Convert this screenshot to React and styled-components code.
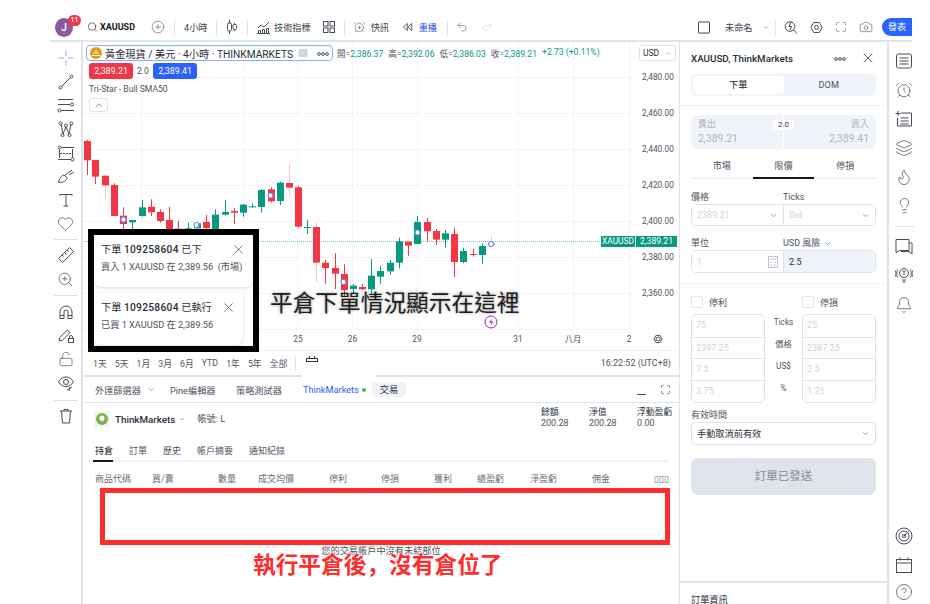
import React from "react"
import styled, { createGlobalStyle } from "styled-components"
import {
  AlarmClock, AlarmClockPlus, Bell, Camera, ChevronDown, CircleHelp, CirclePlus, Flame, Heart, Layers,
  Lightbulb, LockOpen, Maximize, Redo2, Search, Undo2, X, ZoomIn,
} from "lucide-react"

const GlobalStyle = createGlobalStyle`
body { margin: 0; background: #fff; }
* { box-sizing: border-box; }
`

const BAND = "#e0e3eb"
const SOFT = "#f0f3fa"
const GREEN = "#089981"
const RED = "#f23645"
const ICON = "#4a4d57"

const Page = styled.div`
width: 930px;
height: 604px;
overflow: hidden;
background: #fff;
padding: 14px 18px 0 50px;
display: flex;
flex-direction: column;
font-family: Roboto, "Noto Sans CJK TC", sans-serif;
color: #131722;
font-size: 9.2px;
`

/* top toolbar */
const TopBar = styled.div`
height: 26px;
display: flex;
align-items: center;
flex: none;
`
const Slot = styled.div`
flex: none;
display: flex;
align-items: center;
gap: ${({ $gap }) => $gap || 0}px;
margin-left: ${({ $ml }) => $ml || 0}px;
width: ${({ $w }) => $w}px;
white-space: nowrap;
color: ${({ $color }) => $color || "#3d404a"};
`
const Accent = styled.span`
color: #1e53e5;
`
const TopSep = styled.div`
flex: none;
width: 1px;
height: 15px;
background: ${BAND};
margin-left: ${({ $ml }) => $ml || 9}px;
`
const Avatar = styled.div`
position: relative;
width: 19px;
height: 19px;
border-radius: 50%;
background: #8a5a9e;
color: #fff;
font-size: 10px;
font-weight: 500;
display: flex;
align-items: center;
justify-content: center;
`
const Badge = styled.span`
position: absolute;
left: 13px;
top: -3px;
width: 13px;
height: 11px;
border-radius: 6px;
background: ${RED};
color: #fff;
font-size: 7px;
line-height: 11px;
text-align: center;
`
const SymbolName = styled.b`
font-size: 9px;
font-weight: 700;
color: #131722;
`
const PublishBtn = styled.div`
flex: none;
margin-left: 9px;
width: 30px;
height: 18px;
border-radius: 9px 0 0 9px;
background: #2962ff;
color: #fff;
font-size: 9.2px;
line-height: 18px;
text-align: center;
`
const Spacer = styled.div`
flex: 1;
`

/* main layout */
const Main = styled.div`
flex: 1;
min-height: 0;
display: flex;
background: ${BAND};
padding-top: 2px;
`
const LeftBar = styled.div`
flex: none;
width: 31px;
margin-right: 2px;
background: #fff;
display: flex;
flex-direction: column;
align-items: center;
padding-top: 4px;
`
const ToolCell = styled.div`
flex: none;
height: ${({ $h }) => $h || 23.7}px;
width: 100%;
display: flex;
align-items: center;
justify-content: center;
color: ${ICON};
`
const ToolSep = styled.div`
flex: none;
width: 24px;
height: 1px;
background: ${BAND};
margin: ${({ $m }) => $m || "3px 0"};
`
const Center = styled.div`
flex: none;
width: 596px;
margin-right: 1px;
display: flex;
flex-direction: column;
gap: 2px;
`

/* chart */
const ChartPane = styled.div`
position: relative;
flex: none;
height: 333px;
background: #fff;
display: flex;
flex-direction: column;
`
const Canvas = styled.div`
position: relative;
flex: none;
height: 308px;
svg.plot { position: absolute; left: 0; top: 0; }
`
const AxisText = styled.text`
font-family: Roboto, "Noto Sans CJK TC", sans-serif;
font-size: 8.3px;
fill: #50535e;
text-anchor: ${({ $anchor }) => $anchor || "start"};
`
const Legend = styled.div`
position: absolute;
left: 3px;
top: 3px;
display: flex;
flex-direction: column;
align-items: flex-start;
`
const LegendRow = styled.div`
display: flex;
align-items: center;
`
const TitleBox = styled.div`
width: 247px;
height: 16px;
border: 1px solid #8fa9f7;
border-radius: 4px;
display: flex;
align-items: center;
padding: 0 3px;
font-size: 10.2px;
white-space: nowrap;
color: #2a2e39;
background: #fff;
`
const TitleDots = styled.span`
margin-left: auto;
`
const GoldCoin = styled.span`
flex: none;
width: 12px;
height: 12px;
border-radius: 50%;
background: #d9a012;
margin-right: 3px;
display: flex;
align-items: center;
justify-content: center;
`
const Ohlc = styled.div`
display: flex;
gap: 5px;
margin-left: 4px;
font-size: 8.6px;
white-space: nowrap;
color: #50535e;
b { font-weight: 400; color: ${GREEN}; }
`
const QuoteRow = styled.div`
display: flex;
align-items: center;
margin: 2px 0 0 3px;
`
const Quote = styled.div`
width: 44px;
height: 16px;
border-radius: 3px;
background: ${({ $bg }) => $bg};
color: #fff;
font-size: 8.8px;
line-height: 16px;
text-align: center;
`
const Spread = styled.span`
width: 20px;
text-align: center;
font-size: 8.5px;
color: #50535e;
`
const Indicator = styled.div`
margin: 4px 0 0 3px;
font-size: 8.6px;
color: #50535e;
line-height: 12px;
`
const Collapse = styled.div`
margin: 3px 0 0 3px;
width: 19px;
height: 14px;
border: 1px solid ${BAND};
border-radius: 3px;
display: flex;
align-items: center;
justify-content: center;
background: #fff;
`
const FlippedChevron = styled(ChevronDown)`
transform: rotate(180deg);
`
const CurrencySelect = styled.div`
position: absolute;
left: 556px;
top: 3px;
width: 37px;
height: 16px;
border: 1px solid ${BAND};
border-radius: 3px;
background: #fff;
display: flex;
align-items: center;
justify-content: space-between;
padding: 0 3px;
font-size: 8.5px;
color: #2a2e39;
`
const PriceTag = styled.div`
position: absolute;
left: 518px;
top: 194px;
height: 11px;
display: flex;
gap: 1px;
font-size: 8.4px;
line-height: 11px;
color: #fff;
text-align: center;
span { display: block; background: ${GREEN}; }
`
const TagName = styled.span`
width: 34px;
`
const TagPrice = styled.span`
width: 41px;
font-size: 8.6px;
`
const RangeBar = styled.div`
flex: 1;
border-top: 1px solid ${SOFT};
display: flex;
align-items: center;
padding: 0 8px 0 10px;
gap: 8px;
color: #50535e;
font-size: 8.8px;
white-space: nowrap;
`
const RangeSep = styled.div`
width: 1px;
height: 15px;
background: ${BAND};
`
const CalendarMark = styled.svg`
margin: -8px 0 0 2px;
`
const Clock = styled.div`
margin-left: auto;
font-size: 9px;
color: #50535e;
`

/* annotations laid over the screenshot */
const BlackFrame = styled.div`
position: absolute;
left: 5px;
top: 187px;
width: 171px;
height: 123px;
border: 6px solid #000;
background: #fff;
display: flex;
flex-direction: column;
gap: 6px;
z-index: 3;
`
const Toast = styled.div`
flex: none;
width: ${({ $w }) => $w}px;
height: 52px;
padding: 7px 7px 0;
border-radius: 0 0 7px 7px;
box-shadow: 0 1px 3px rgba(30, 35, 60, 0.18);
display: flex;
flex-direction: column;
`
const ToastHead = styled.div`
display: flex;
align-items: center;
justify-content: space-between;
font-size: 10.2px;
line-height: 14px;
white-space: nowrap;
color: #2a2e39;
b { font-weight: 500; letter-spacing: 0.3px; }
`
const ToastBody = styled.div`
margin-top: 4px;
font-size: 9.2px;
line-height: 12px;
white-space: pre;
color: #50535e;
`
const Caption = styled.div`
position: absolute;
left: 187px;
top: 246px;
font-size: 22.7px;
line-height: 32px;
white-space: nowrap;
color: #1d1d1d;
text-shadow: 0 0 3px rgba(0, 0, 0, 0.45);
z-index: 3;
`
const RedBox = styled.div`
position: absolute;
left: 17px;
top: 111px;
width: 570px;
height: 57px;
border: 5px solid #ff2d2d;
`
const RedCaption = styled.div`
position: absolute;
left: 170px;
top: 171px;
font-family: "Noto Sans CJK SC", sans-serif;
font-size: 22.7px;
font-weight: 700;
line-height: 32px;
white-space: nowrap;
color: #ff2d2d;
text-shadow: 0 0 2px #fff;
`

/* bottom panel */
const BottomPanel = styled.div`
position: relative;
flex: 1;
background: #fff;
display: flex;
flex-direction: column;
`
const Notch = styled.div`
position: absolute;
left: 219px;
top: -2px;
width: 74px;
height: 2px;
background: #fff;
`
const PanelTabs = styled.div`
flex: none;
height: 26px;
border-bottom: 1px solid ${BAND};
display: flex;
align-items: center;
color: #50535e;
white-space: nowrap;
font-size: 9.2px;
padding-left: 12px;
`
const PanelTab = styled.div`
flex: none;
display: flex;
align-items: center;
margin-left: ${({ $ml }) => $ml || 0}px;
width: ${({ $w }) => $w}px;
gap: ${({ $gap }) => $gap || 0}px;
color: ${({ $color }) => $color || "#50535e"};
`
const OnlineDot = styled.span`
flex: none;
width: 4px;
height: 4px;
border-radius: 50%;
background: #4caf50;
`
const TradeChip = styled.div`
flex: none;
margin-left: 5px;
width: 34px;
height: 15px;
border-radius: 4px;
background: ${SOFT};
line-height: 15px;
text-align: center;
color: #2a2e39;
`
const MinMark = styled.div`
width: 9px;
height: 1px;
background: #50535e;
margin: 9px 0 0 231px;
`
const AccountRow = styled.div`
flex: none;
height: 43px;
display: flex;
padding: 8px 11px 0 11px;
`
const BrokerLogo = styled.div`
flex: none;
width: 16px;
height: 16px;
border-radius: 2px;
background: ${SOFT};
display: flex;
align-items: center;
justify-content: center;
`
const BrokerName = styled.div`
height: 16px;
margin-left: 5px;
display: flex;
align-items: center;
gap: 3px;
font-weight: 500;
font-size: 9.8px;
white-space: nowrap;
color: #2a2e39;
`
const AccountNo = styled.div`
margin-left: 11px;
height: 16px;
line-height: 16px;
color: #50535e;
white-space: nowrap;
`
const Stats = styled.div`
margin-left: auto;
margin-top: -4px;
display: flex;
`
const Stat = styled.div`
width: ${({ $w }) => $w}px;
font-size: 8.8px;
line-height: 11px;
color: #2a2e39;
white-space: nowrap;
div { font-size: 9px; color: #50535e; }
`
const SubTabs = styled.div`
flex: none;
margin: -4px 10px 0;
height: 20px;
border-bottom: 2px solid ${SOFT};
display: flex;
gap: 16px;
padding: 0 2px;
font-size: 9px;
color: #50535e;
line-height: 18px;
`
const SubTab = styled.div`
position: relative;
height: 20px;
color: ${({ $active }) => ($active ? "#131722" : "#50535e")};
&::after {
  content: "";
  display: ${({ $active }) => ($active ? "block" : "none")};
  position: absolute;
  left: -2px;
  right: 0;
  bottom: 0;
  height: 2px;
  background: #131722;
}
`
const Columns = styled.div`
flex: none;
margin-top: 9px;
height: 17px;
display: grid;
grid-template-columns: 57px 66px 40px 71px 52px 53px 43px 53px 62px 62px 20px;
padding-left: 12px;
font-size: 9px;
color: #6a6d78;
line-height: 16px;
white-space: nowrap;
`
const EmptyNote = styled.div`
margin-top: 57px;
text-align: center;
font-size: 9.2px;
line-height: 12px;
color: #50535e;
`

/* order panel */
const OrderPanel = styled.div`
flex: none;
width: 207px;
margin-right: 2px;
background: #fff;
display: flex;
flex-direction: column;
`
const Section = styled.div`
flex: none;
margin: ${({ $mt }) => $mt || 0}px 11px 0;
`
const PanelHead = styled.div`
flex: none;
height: 32px;
display: flex;
align-items: center;
padding: 0 11px;
font-size: 9.8px;
font-weight: 500;
white-space: nowrap;
color: #2a2e39;
`
const HeadDots = styled.span`
margin: 0 14px 0 auto;
`
const Segment = styled.div`
height: 22px;
border-radius: 5px;
background: ${SOFT};
padding: 2px;
display: flex;
`
const SegmentItem = styled.div`
flex: 1;
border-radius: 4px;
background: ${({ $active }) => ($active ? "#fff" : "transparent")};
line-height: 18px;
text-align: center;
color: ${({ $active }) => ($active ? "#131722" : "#50535e")};
`
const Rule = styled.div`
flex: none;
height: 1px;
background: ${SOFT};
margin-top: ${({ $mt }) => $mt}px;
`
const SidesBox = styled.div`
position: relative;
height: 34px;
border-radius: 6px;
background: ${SOFT};
display: flex;
justify-content: space-between;
padding: 3px 7px 0;
color: #b2b5be;
line-height: 13px;
&::before {
  content: "";
  position: absolute;
  left: 92px;
  top: 0;
  bottom: 0;
  width: 1px;
  background: #fff;
}
`
const Side = styled.div`
text-align: ${({ $right }) => ($right ? "right" : "left")};
font-size: 9px;
div { font-size: 10.4px; margin-top: 1px; }
`
const SpreadChip = styled.span`
position: absolute;
left: 82px;
top: 5px;
width: 21px;
height: 10px;
border-radius: 3px;
background: #fff;
color: #2a2e39;
font-size: 7.8px;
line-height: 10px;
text-align: center;
`
const OrderTabs = styled.div`
display: flex;
height: 22px;
border-bottom: 2px solid ${SOFT};
`
const OrderTab = styled.div`
position: relative;
flex: 1;
line-height: 18px;
text-align: center;
color: #50535e;
&::after {
  content: "";
  display: ${({ $active }) => ($active ? "block" : "none")};
  position: absolute;
  left: 0;
  right: 0;
  bottom: -2px;
  height: 2px;
  background: #131722;
}
`
const LabelRow = styled.div`
display: flex;
height: 13px;
line-height: 13px;
color: #50535e;
font-size: 9px;
white-space: nowrap;
`
const LabelCell = styled.div`
width: 92px;
display: flex;
align-items: center;
gap: 3px;
`
const InputGroup = styled.div`
height: ${({ $h }) => $h || 22}px;
border: 1px solid ${BAND};
border-radius: 5px;
display: flex;
overflow: hidden;
`
const InputCell = styled.div`
flex: 1;
display: flex;
align-items: center;
justify-content: space-between;
padding: 0 5px;
font-size: 9px;
color: ${({ $strong }) => ($strong ? "#2a2e39" : "#d1d4dc")};
background: ${({ $filled }) => ($filled ? SOFT : "#fff")};
& + & { border-left: 1px solid ${BAND}; }
`
const Checks = styled.div`
display: flex;
height: 12px;
`
const CheckItem = styled.div`
width: ${({ $w }) => $w}px;
display: flex;
align-items: center;
gap: 6px;
color: #50535e;
font-size: 9px;
`
const CheckBox = styled.span`
width: 12px;
height: 12px;
border: 1px solid ${BAND};
border-radius: 2px;
`
const StopGrid = styled.div`
display: grid;
grid-template-columns: 74px 37px 74px;
`
const StopColumn = styled.div`
border: 1px solid ${BAND};
border-radius: 5px;
display: grid;
grid-auto-rows: 21.7px;
`
const StopCell = styled.div`
padding: 0 4px;
line-height: 21px;
font-size: 9px;
color: #d1d4dc;
& + & { border-top: 1px solid ${BAND}; }
`
const StopLabels = styled.div`
display: grid;
grid-auto-rows: 22px;
text-align: center;
line-height: 17px;
font-size: 8.2px;
color: #50535e;
`
const Select = styled.div`
height: 23px;
border: 1px solid ${BAND};
border-radius: 4px;
display: flex;
align-items: center;
justify-content: space-between;
padding: 0 5px;
font-size: 9.2px;
color: #2a2e39;
`
const SentBtn = styled.div`
height: 37px;
border-radius: 7px;
background: ${BAND};
color: #9598a1;
font-size: 11.5px;
font-weight: 500;
line-height: 37px;
text-align: center;
`
const OrderInfo = styled.div`
margin-top: auto;
flex: none;
height: 23px;
border-top: 2px solid ${BAND};
padding: 10px 11px 0;
font-size: 9.2px;
line-height: 13px;
color: #2a2e39;
`

/* right bar */
const RightBar = styled.div`
flex: none;
width: 23px;
background: #fff;
display: flex;
flex-direction: column;
align-items: center;
padding: 4px 0 0 7px;
`
const RightCell = styled.div`
flex: none;
height: ${({ $h }) => $h || 29}px;
display: flex;
align-items: center;
justify-content: center;
color: ${ICON};
`
const RightSep = styled.div`
flex: none;
width: 19px;
height: 1px;
background: ${BAND};
margin: 6px 0 5px;
`
const RightBottom = styled.div`
margin-top: auto;
display: flex;
flex-direction: column;
`

/* hand drawn icons, 18 box */
const Draw = ({ size = 18, w, h, color = "currentColor", sw = 1, children }) => (
  <svg width={w || size} height={h || size} viewBox={`0 0 ${w || 18} ${h || 18}`} fill="none" stroke={color} strokeWidth={sw}>
    {children}
  </svg>
)
const Dots = () => (
  <Draw w={12} h={6} color="#50535e">
    <circle cx="2" cy="3" r="1.4" /><circle cx="6" cy="3" r="1.4" /><circle cx="10" cy="3" r="1.4" />
  </Draw>
)
const Chev = ({ color = "#50535e", size = 9 }) => <ChevronDown size={size} color={color} strokeWidth={1.4} />
const lu = { size: 17, strokeWidth: 1 }

const candles = [
  [260, 30, 33, 91, 135, "r"], [286, 90, 90, 140, 162, "r"], [314, 134, 137, 166, 207, "r", 1], [342, 160, 165, 258, 258, "r"],
  [370, 232, 257, 282, 300, "r"], [397, 270, 270, 277, 300, "g"], [425, 210, 232, 258, 260, "g"], [452, 208, 230, 247, 258, "r"],
  [480, 238, 246, 273, 278, "r"], [508, 231, 270, 300, 300, "r"], [535, 272, 296, 300, 300, "r"], [563, 278, 295, 300, 300, "g"],
  [590, 278, 280, 295, 300, "g"], [618, 255, 276, 294, 300, "r"], [646, 238, 254, 298, 300, "g"], [674, 210, 246, 254, 257, "g"],
  [701, 235, 243, 248, 282, "r"], [729, 222, 224, 248, 260, "g"], [757, 220, 229, 231, 233, "g"], [784, 177, 180, 231, 248, "g"],
  [812, 172, 178, 214, 218, "r"], [839, 155, 158, 213, 225, "g"], [867, 102, 159, 173, 200, "r", 1], [893, 168, 172, 290, 293, "r"],
  [920, 270, 291, 293, 312, "g"], [948, 277, 291, 398, 457, "r", 1], [976, 390, 398, 414, 461, "r"], [1004, 370, 414, 431, 477, "r"],
  [1031, 403, 432, 480, 500, "r"], [1058, 462, 467, 477, 490, "g"], [1086, 462, 471, 478, 480, "r"], [1114, 387, 437, 478, 490, "g"],
  [1141, 408, 423, 440, 462, "g"], [1169, 390, 398, 424, 434, "g"], [1196, 323, 334, 398, 415, "g"], [1224, 335, 335, 347, 378, "r"],
  [1252, 258, 276, 342, 342, "g"], [1280, 264, 276, 304, 335, "r"], [1307, 297, 303, 329, 345, "r"], [1335, 300, 310, 329, 353, "g"],
  [1362, 293, 312, 396, 441, "r"], [1390, 353, 363, 396, 400, "g"], [1418, 356, 372, 375, 380, "r"], [1445, 340, 348, 375, 403, "g"],
  [1473, 318, 341, 343, 350, "g", 1],
]
const markers = [[123.5, 219.5], [196.5, 225], [270.5, 195.5], [343.5, 282], [417.5, 232.5], [491, 244]]
const prices = [[77, "2,480.00"], [113, "2,460.00"], [149, "2,440.00"], [185, "2,420.00"], [221, "2,400.00"], [257, "2,380.00"], [293, "2,360.00"]]
const gridX = [141.5, 243.5, 297.5, 352.5, 417.5, 518.5, 573.5, 629.5]
const timeLabels = [[298, "25"], [352.5, "26"], [417, "29"], [518, "31"], [573, "八月"], [629, "2"]]

function Plot() {
  return (
    <svg className="plot" width="596" height="308" viewBox="83 42 596 308">
      {prices.map(([y]) => <line key={y} x1="83" x2="636" y1={y + 0.5} y2={y + 0.5} stroke="#f3f4f7" />)}
      <line x1="83" x2="636" y1="329.5" y2="329.5" stroke="#f3f4f7" />
      {gridX.map((x) => <line key={x} x1={x} x2={x} y1="42" y2="330" stroke="#f3f4f7" />)}
      <line x1="83" x2="602" y1="241.5" y2="241.5" stroke={GREEN} strokeOpacity="0.55" strokeDasharray="1 1" />
      {candles.map(([zx, wickTop, top, bottom, wickBottom, side, pale]) => {
        const x = Math.round(zx / 3)
        const fill = side === "g" ? GREEN : RED
        return (
          <g key={zx}>
            <line x1={x + 0.5} x2={x + 0.5} y1={130 + wickTop / 3} y2={130 + wickBottom / 3} stroke={fill} strokeOpacity={pale ? 0.3 : 1} />
            <rect x={x - 3} y={130 + top / 3} width="7" height={Math.max((bottom - top) / 3, 1)} fill={fill} />
          </g>
        )
      })}
      {markers.map(([x, y]) => <circle key={x} cx={x} cy={y} r="2.5" fill="#fff" stroke="#6d8ff0" strokeWidth="1.2" />)}
      {prices.map(([y, label]) => <AxisText key={label} x="642" y={y + 3}>{label}</AxisText>)}
      {timeLabels.map(([x, label]) => <AxisText key={label} x={x} y="342" $anchor="middle">{label}</AxisText>)}
      <circle cx="491" cy="322" r="6" fill="#fff" stroke="#9c27b0" />
      <path d="M492 318.5l-3 4h2.4l-.9 3 3-4h-2.4z" fill="#9c27b0" />
      <circle cx="658" cy="339" r="2" fill="none" stroke="#50535e" />
      <path d="M654 339l2-3.6h4l2 3.6-2 3.6h-4z" fill="none" stroke="#50535e" />
    </svg>
  )
}

function TopToolbar() {
  return (
    <TopBar>
      <Slot $ml={5} $w={18}><Avatar>J<Badge>11</Badge></Avatar></Slot>
      <Slot $ml={14} $w={48} $gap={2}><Search size={12} color="#131722" strokeWidth={1.3} /><SymbolName>XAUUSD</SymbolName></Slot>
      <Slot $ml={16} $w={14}><CirclePlus size={14} strokeWidth={1} color={ICON} /></Slot>
      <TopSep />
      <Slot $ml={9} $w={23}>4小時</Slot>
      <TopSep />
      <Slot $ml={9} $w={12}>
        <Draw w={12} h={16} color={ICON}><path d="M3.5 1v14M8.5 4v8" /><rect x="1.5" y="4" width="4" height="8" rx="1.5" fill="#fff" /><rect x="7" y="5.5" width="3.5" height="5" rx="1" fill="#fff" /></Draw>
      </Slot>
      <TopSep />
      <Slot $ml={9} $w={54} $gap={4}>
        <Draw w={13} h={14} color={ICON}><path d="M1 8l3-3 3 2 5-5" /><path d="M1.5 13.5v-3h2v3M5.5 13.5v-4h2v4M9.5 13.5v-5h2v5M0 13.5h13" /></Draw>
        技術指標
      </Slot>
      <Slot $ml={12} $w={12}>
        <Draw w={12} h={12} color={ICON}><rect x=".5" y=".5" width="4.5" height="4.5" /><rect x="7" y=".5" width="4.5" height="4.5" /><rect x=".5" y="7" width="4.5" height="4.5" /><rect x="7" y="7" width="4.5" height="4.5" /></Draw>
      </Slot>
      <TopSep />
      <Slot $ml={8} $w={36} $gap={5}><AlarmClockPlus size={14} strokeWidth={1} color={ICON} />快訊</Slot>
      <Slot $ml={13} $w={35} $gap={6}>
        <Draw w={12} h={10} color={ICON}><path d="M6 1L1.5 5 6 9zM11 1L6.5 5 11 9z" /></Draw>
        <Accent>重播</Accent>
      </Slot>
      <TopSep $ml={10} />
      <Slot $ml={8} $w={12}><Undo2 size={12} strokeWidth={1} color="#50535e" /></Slot>
      <Slot $ml={13} $w={12}><Redo2 size={12} strokeWidth={1} color="#c1c4cd" /></Slot>
      <Spacer />
      <Slot $w={12}><Draw w={13} h={13} color="#2a2e39"><rect x=".5" y=".5" width="12" height="12" rx="1" /></Draw></Slot>
      <Slot $ml={15} $w={26}>未命名</Slot>
      <Slot $ml={11} $w={8}><Chev /></Slot>
      <TopSep $ml={5} />
      <Slot $ml={8} $w={14} $color={ICON}>
        <Draw w={14} h={14}><circle cx="6" cy="6.5" r="4.8" /><path d="M9.5 10l3.5 3.5M7 2L5 6.5h2.5L6 10" /></Draw>
      </Slot>
      <Slot $ml={12} $w={13} $color={ICON}>
        <Draw w={13} h={13}><path d="M1 6.5l2.7-5h5.6l2.7 5-2.7 5H3.7z" /><circle cx="6.5" cy="6.5" r="2" /></Draw>
      </Slot>
      <Slot $ml={12} $w={12} $color={ICON}><Maximize size={12} strokeWidth={1} /></Slot>
      <Slot $ml={12} $w={14} $color={ICON}><Camera size={14} strokeWidth={1} /></Slot>
      <PublishBtn>發表</PublishBtn>
    </TopBar>
  )
}

function DrawingTools() {
  return (
    <LeftBar>
      <ToolCell><Draw color="#8fabf7"><path d="M9 1.5V7M9 11v5.5M1.500 9H7M11 9h5.5" /></Draw></ToolCell>
      <ToolCell><Draw><path d="M4.5 13.5l9-9" /><circle cx="3.5" cy="14.5" r="1.5" /><circle cx="14.5" cy="3.5" r="1.5" /></Draw></ToolCell>
      <ToolCell><Draw><path d="M1 3.5h15M1 8.5h12M4 14.5h13" /><circle cx="15" cy="8.5" r="1.5" /><circle cx="2.5" cy="14.5" r="1.5" /></Draw></ToolCell>
      <ToolCell><Draw><path d="M4 4l2 10 3-7 3 7 2-10" /><circle cx="3.5" cy="3.5" r="1.5" /><circle cx="14.5" cy="3.5" r="1.5" /><circle cx="9" cy="5.5" r="1.5" /><circle cx="5.5" cy="15" r="1.5" /><circle cx="12.5" cy="15" r="1.5" /></Draw></ToolCell>
      <ToolCell><Draw><path d="M4 3.5h13M1 15.5h13" /><path d="M3 9.5h12" strokeDasharray="2 1" /><circle cx="2.5" cy="3.5" r="1.5" /><circle cx="15.5" cy="15.5" r="1.5" /><path d="M2.5 5v9M15.5 5v9" /></Draw></ToolCell>
      <ToolCell><Draw><path d="M1.5 15.5c1-4 2.5-7 5.5-7.5l3 2.5c0 3-3 5-8.5 5zM8 8l7-5M12 8l5-3" /></Draw></ToolCell>
      <ToolCell><Draw><path d="M3 5V3.5h12V5M9 3.5V15M6.500 15h5" /></Draw></ToolCell>
      <ToolCell><Heart {...lu} /></ToolCell>
      <ToolSep $m="3px 0 4px" />
      <ToolCell><Draw><path d="M1.5 12.500L12.500 1.500l4 4-11 11zM5 9l1.500 1.500M7.500 6.500L9.500 8.500M10 4l1.500 1.500M12.500 1.500" /></Draw></ToolCell>
      <ToolCell><ZoomIn {...lu} /></ToolCell>
      <ToolSep $m="4px 0 4px" />
      <ToolCell><Draw><path d="M3 15.5V9a6 6 0 0 1 12 0v6.5h-4V9a2 2 0 0 0-4 0v6.5zM3 12.5h4M11 12.5h4" /></Draw></ToolCell>
      <ToolCell><Draw><path d="M2 15l.8-3.5L10.300 4 13 6.700 5.500 14.200z" /><rect x="11.5" y="12.5" width="5" height="4" /><path d="M12.5 12.5V11a1.500 1.500 0 0 1 3 0v1.500" /></Draw></ToolCell>
      <ToolCell><LockOpen size={16} strokeWidth={1} /></ToolCell>
      <ToolCell><Draw><path d="M1.500 8c2-3.500 4.500-5 7.500-5s5.500 1.500 7.500 5c-2 3-4.500 4.500-7.500 4.500S3.500 11 1.500 8z" /><circle cx="9" cy="8" r="2.5" /><path d="M10 16l5-3M12 17l1-4" /></Draw></ToolCell>
      <ToolSep $m="5px 0 4px" />
      <ToolCell><Draw><path d="M3 4h12M6.500 4L7 2.500h4l.5 1.500M4.500 4l1 12h7l1-12" /></Draw></ToolCell>
    </LeftBar>
  )
}

function ChartArea() {
  return (
    <ChartPane>
      <Canvas>
        <Plot />
        <Legend>
          <LegendRow>
            <TitleBox>
              <GoldCoin><Draw w={8} h={6} color="#fff" sw={1.2}><path d="M0 5.5h8M1.500 3h5M3 1h2" /></Draw></GoldCoin>
              黃金現貨 / 美元 · 4小時 · THINKMARKETS
              <Draw w={20} h={10} color="#d1d4dc"><path d="M6 1.5h8v7H6z" fill="#d1d4dc" /></Draw>
              <TitleDots><Dots /></TitleDots>
            </TitleBox>
            <Ohlc>
              <span>開=<b>2,386.37</b></span>
              <span>高=<b>2,392.06</b></span>
              <span>低=<b>2,386.03</b></span>
              <span>收=<b>2,389.21</b></span>
              <b>+2.73 (+0.11%)</b>
            </Ohlc>
          </LegendRow>
          <QuoteRow>
            <Quote $bg={RED}>2,389.21</Quote>
            <Spread>2.0</Spread>
            <Quote $bg="#2962ff">2,389.41</Quote>
          </QuoteRow>
          <Indicator>Tri-Star - Bull SMA50</Indicator>
          <Collapse><FlippedChevron size={10} strokeWidth={1.4} color="#2a2e39" /></Collapse>
        </Legend>
        <CurrencySelect>USD<Chev size={7} /></CurrencySelect>
        <PriceTag><TagName>XAUUSD</TagName><TagPrice>2,389.21</TagPrice></PriceTag>
      </Canvas>
      <RangeBar>
        {["1天", "5天", "1月", "3月", "6月", "YTD", "1年", "5年", "全部"].map((r) => <span key={r}>{r}</span>)}
        <RangeSep />
        <CalendarMark width="12" height="6" viewBox="0 0 12 6" fill="none" stroke="#2a2e39">
          <path d="M.5 5.5v-3h11v3M3.500 2.500V0M8.500 2.500V0M0 5.500h12" />
        </CalendarMark>
        <Clock>16:22:52 (UTC+8)</Clock>
      </RangeBar>
      <BlackFrame>
        <Toast $w={159}>
          <ToastHead><span>下單 <b>109258604</b> 已下</span><X size={15} strokeWidth={1} color="#2a2e39" /></ToastHead>
          <ToastBody>買入 1 XAUUSD 在 2,389.56  (市場)</ToastBody>
        </Toast>
        <Toast $w={149}>
          <ToastHead><span>下單 <b>109258604</b> 已執行</span><X size={15} strokeWidth={1} color="#2a2e39" /></ToastHead>
          <ToastBody>已買 1 XAUUSD 在 2,389.56</ToastBody>
        </Toast>
      </BlackFrame>
      <Caption>平倉下單情況顯示在這裡</Caption>
    </ChartPane>
  )
}

function TradingPanel() {
  return (
    <BottomPanel>
      <Notch />
      <PanelTabs>
        <PanelTab $w={65} $gap={6}>外匯篩選器<Chev /></PanelTab>
        <PanelTab $ml={10} $w={66}>Pine編輯器</PanelTab>
        <PanelTab $w={67}>策略測試器</PanelTab>
        <PanelTab $w={64} $gap={3} $color="#2962ff">ThinkMarkets<OnlineDot /></PanelTab>
        <TradeChip>交易</TradeChip>
        <MinMark />
        <Slot $ml={14} $w={11}><Maximize size={11} strokeWidth={1} color="#131722" /></Slot>
      </PanelTabs>
      <AccountRow>
        <BrokerLogo>
          <Draw w={12} h={12} sw={0}><circle cx="6" cy="6" r="6" fill="#7cb342" /><path d="M3.500 5a2.500 2.500 0 0 1 5 0c0 1.200-1 1.500-1 3h-3c0-1.500-1-1.800-1-3z" fill="#fff" /></Draw>
        </BrokerLogo>
        <BrokerName>ThinkMarkets<Chev size={8} /></BrokerName>
        <AccountNo>帳號: L</AccountNo>
        <Stats>
          <Stat $w={48}>餘額<div>200.28</div></Stat>
          <Stat $w={48}>淨值<div>200.28</div></Stat>
          <Stat $w={31}>浮動盈虧<div>0.00</div></Stat>
        </Stats>
      </AccountRow>
      <SubTabs>
        <SubTab $active>持倉</SubTab>
        <SubTab>訂單</SubTab>
        <SubTab>歷史</SubTab>
        <SubTab>帳戶摘要</SubTab>
        <SubTab>通知紀錄</SubTab>
      </SubTabs>
      <Columns>
        {["商品代碼", "買/賣", "數量", "成交均價", "停利", "停損", "獲利", "總盈虧", "淨盈虧", "佣金", "▯▯▯"].map((c) => <span key={c}>{c}</span>)}
      </Columns>
      <EmptyNote>您的交易帳戶中沒有未結部位</EmptyNote>
      <RedBox />
      <RedCaption>執行平倉後，沒有倉位了</RedCaption>
    </BottomPanel>
  )
}

function OrderForm() {
  return (
    <OrderPanel>
      <PanelHead>
        XAUUSD, ThinkMarkets
        <HeadDots><Dots /></HeadDots>
        <X size={16} strokeWidth={1} color="#131722" />
      </PanelHead>
      <Section>
        <Segment><SegmentItem $active>下單</SegmentItem><SegmentItem>DOM</SegmentItem></Segment>
      </Section>
      <Rule $mt={9} />
      <Section $mt={9}>
        <SidesBox>
          <Side>賣出<div>2,389.21</div></Side>
          <SpreadChip>2.0</SpreadChip>
          <Side $right>買入<div>2,389.41</div></Side>
        </SidesBox>
      </Section>
      <Section $mt={8}>
        <OrderTabs>
          <OrderTab>市場</OrderTab>
          <OrderTab $active>限價</OrderTab>
          <OrderTab>停損</OrderTab>
        </OrderTabs>
      </Section>
      <Section $mt={12}>
        <LabelRow><LabelCell>價格</LabelCell><LabelCell>Ticks</LabelCell></LabelRow>
        <InputGroup>
          <InputCell>2389.21<Chev /></InputCell>
          <InputCell>Bid<Chev /></InputCell>
        </InputGroup>
      </Section>
      <Section $mt={11}>
        <LabelRow><LabelCell>單位</LabelCell><LabelCell>USD 風險 <Chev /></LabelCell></LabelRow>
        <InputGroup $h={23}>
          <InputCell>
            1
            <Draw w={10} h={12} color="#c1c4cd"><rect x=".5" y=".5" width="9" height="11" /><path d="M2 3h6M2 6.500h2M6 6.500h2M2 9h2M6 9h2" /></Draw>
          </InputCell>
          <InputCell $filled $strong>2.5</InputCell>
        </InputGroup>
      </Section>
      <Rule $mt={10} />
      <Section $mt={12}>
        <Checks>
          <CheckItem $w={111}><CheckBox />停利</CheckItem>
          <CheckItem $w={74}><CheckBox />停損</CheckItem>
        </Checks>
      </Section>
      <Section $mt={6}>
        <StopGrid>
          <StopColumn>
            <StopCell>75</StopCell><StopCell>2397.25</StopCell><StopCell>7.5</StopCell><StopCell>3.75</StopCell>
          </StopColumn>
          <StopLabels><span>Ticks</span><span>價格</span><span>US$</span><span>%</span></StopLabels>
          <StopColumn>
            <StopCell>25</StopCell><StopCell>2387.25</StopCell><StopCell>2.5</StopCell><StopCell>1.25</StopCell>
          </StopColumn>
        </StopGrid>
      </Section>
      <Section $mt={6}>
        <LabelRow>有效時間</LabelRow>
        <Select>手動取消前有效<Chev /></Select>
      </Section>
      <Section $mt={13}><SentBtn>訂單已發送</SentBtn></Section>
      <OrderInfo>訂單資訊</OrderInfo>
    </OrderPanel>
  )
}

function SideTools() {
  return (
    <RightBar>
      <RightCell $h={29}><Draw><rect x="1.5" y="2" width="15" height="14" rx="2" /><path d="M4.5 6h9M4.500 9h9M4.500 12h9" /></Draw></RightCell>
      <RightCell><AlarmClock size={18} strokeWidth={1} /></RightCell>
      <RightCell><Draw><path d="M3 1v5M.5 3.500h5" /><path d="M6 3h10.500v13H2.500V8" /><path d="M5.500 8h8M5.500 11h8M5.500 14h8" /></Draw></RightCell>
      <RightCell><Layers size={18} strokeWidth={1} /></RightCell>
      <RightCell><Flame size={18} strokeWidth={1} /></RightCell>
      <RightCell><Lightbulb size={17} strokeWidth={1} /></RightCell>
      <RightSep />
      <RightCell $h={28}><Draw><path d="M1 2.500h13v11H5l-4 2zM14 6h3v11l-3-2.500H6" /></Draw></RightCell>
      <RightCell $h={29}><Draw><circle cx="9" cy="7" r="4.5" /><path d="M7 14h4M7.500 16h3M9 5v4M7.500 5h3M2.500 3.500c-1 2.500-1 5.500 0 8M.5 4.500c-.6 2-.6 4 0 6M15.500 3.500c1 2.500 1 5.500 0 8M17.500 4.500c.6 2 .6 4 0 6" /></Draw></RightCell>
      <RightCell $h={31}><Bell size={18} strokeWidth={1} /></RightCell>
      <RightBottom>
        <RightCell $h={29}><Draw><circle cx="9" cy="9" r="8" /><circle cx="9" cy="9" r="5" /><circle cx="9" cy="9" r="1.5" /><path d="M9 9l5-5" /></Draw></RightCell>
        <RightCell $h={29}><Draw><rect x="1.5" y="3.5" width="15" height="13" /><path d="M1.500 7h15M5 1.500v3M13 1.500v3" /></Draw></RightCell>
        <RightCell $h={25}><CircleHelp size={18} strokeWidth={1} /></RightCell>
      </RightBottom>
    </RightBar>
  )
}

export default function App() {
  return (
    <Page>
      <GlobalStyle />
      <TopToolbar />
      <Main>
        <DrawingTools />
        <Center>
          <ChartArea />
          <TradingPanel />
        </Center>
        <OrderForm />
        <SideTools />
      </Main>
    </Page>
  )
}
